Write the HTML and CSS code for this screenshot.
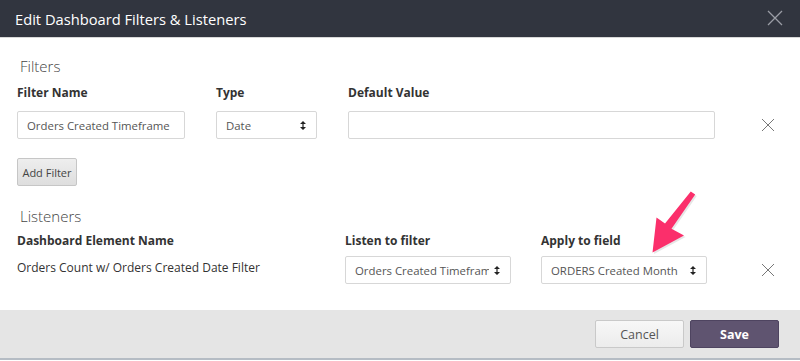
FILE: index.html
```html
<!DOCTYPE html>
<html lang="en">
<head>
    <meta charset="UTF-8">
    <title>Edit Dashboard Filters &amp; Listeners</title>
    <link rel="stylesheet" href="styles.css">
</head>
<body>
    <div class="modal">
        <header class="modal-header">
            <h1>Edit Dashboard Filters &amp; Listeners</h1>
            <span class="close">
                <svg width="16" height="16" viewBox="0 0 16 16"><path d="M1 1L15 15M15 1L1 15" stroke="#9a9da5" stroke-width="1.3"/></svg>
            </span>
        </header>

        <section class="modal-body">
            <h2>Filters</h2>
            <div class="filter-grid">
                <label>Filter Name</label>
                <label>Type</label>
                <label>Default Value</label>
                <span></span>

                <div class="field">Orders Created Timeframe</div>
                <div class="field select">
                    <span>Date</span>
                    <svg width="6" height="9" viewBox="0 0 6 9"><path d="M3 0L6 3H0Z M3 9L0 6H6Z M2.4 2h1.2v5H2.4Z" fill="#222"/></svg>
                </div>
                <div class="field"></div>
                <span class="remove">
                    <svg width="14" height="14" viewBox="0 0 14 14"><path d="M1 1L13 13M13 1L1 13" stroke="#777" stroke-width="1"/></svg>
                </span>
            </div>

            <button class="btn-add">Add Filter</button>

            <h2>Listeners</h2>
            <div class="listener-grid">
                <label>Dashboard Element Name</label>
                <label>Listen to filter</label>
                <label>Apply to field</label>
                <span></span>

                <div class="element-name">Orders Count w/ Orders Created Date Filter</div>
                <div class="field select">
                    <span class="clip">Orders Created Timeframe</span>
                    <svg width="6" height="9" viewBox="0 0 6 9"><path d="M3 0L6 3H0Z M3 9L0 6H6Z M2.4 2h1.2v5H2.4Z" fill="#222"/></svg>
                </div>
                <div class="field select">
                    <span>ORDERS Created Month</span>
                    <svg width="6" height="9" viewBox="0 0 6 9"><path d="M3 0L6 3H0Z M3 9L0 6H6Z M2.4 2h1.2v5H2.4Z" fill="#222"/></svg>
                </div>
                <span class="remove">
                    <svg width="14" height="14" viewBox="0 0 14 14"><path d="M1 1L13 13M13 1L1 13" stroke="#777" stroke-width="1"/></svg>
                </span>
            </div>
        </section>

        <footer class="modal-footer">
            <button class="btn-cancel">Cancel</button>
            <button class="btn-save">Save</button>
        </footer>

        <!-- annotation arrow drawn over the dialog -->
        <svg class="pointer" width="800" height="361" viewBox="0 0 800 361">
            <polygon points="690.8,191.4 695.2,194.6 671.5,228.8 684,235.5 652.5,252.5 656.5,217.5 665,223.5" fill="#b8b8b8" opacity="0.35" transform="translate(1.5,1.5)"/>
            <polygon points="690.8,191.4 695.2,194.6 671.5,228.8 684,235.5 652.5,252.5 656.5,217.5 665,223.5" fill="#fb2f6b"/>
        </svg>
    </div>
</body>
</html>
```

FILE: styles.css
```css
/* General */
body {
    margin: 0;
    font-family: 'Open Sans', 'Liberation Sans', sans-serif;
    color: #333;
    background: #fff;
}

.modal {
    position: relative;
    width: 800px;
    height: 361px;
    overflow: hidden;
}

/* Header */
.modal-header {
    height: 38px;
    background-color: #31353f;
    border-bottom: 1px solid #d8d8d8;
    display: flex;
    align-items: center;
    justify-content: space-between;
    padding: 0 17px 0 15px;
    box-sizing: border-box;
}

.modal-header h1 {
    margin: 0;
    font-size: 14.7px;
    font-weight: 400;
    color: #fff;
}

.close {
    display: flex;
    margin-top: -1px;
}

/* Body */
.modal-body {
    padding: 18px 17px 0 17px;
    height: 272px;
    box-sizing: border-box;
}

.modal-body h2 {
    margin: 0 0 9px 3px;
    font-size: 15px;
    font-weight: 300;
    color: #444;
    line-height: 20px;
}

label {
    font-size: 12px;
    font-weight: 700;
    color: #333;
    line-height: 16px;
}

.filter-grid {
    display: grid;
    grid-template-columns: 168px 101px 367px 1fr;
    column-gap: 31px;
    row-gap: 10px;
    align-items: center;
}

.listener-grid {
    display: grid;
    grid-template-columns: 298px 166px 166px 1fr;
    column-gap: 30px;
    row-gap: 7px;
    align-items: center;
    margin-top: -2px;
}

.field {
    height: 28px;
    border: 1px solid #d7d7d7;
    border-radius: 2px;
    box-sizing: border-box;
    font-size: 11.4px;
    color: #555;
    display: flex;
    align-items: center;
    padding: 0 9px;
    background: #fff;
    white-space: nowrap;
}

.select {
    justify-content: space-between;
}

.select span {
    overflow: hidden;
}

.select svg {
    flex-shrink: 0;
    margin-left: 4px;
    margin-right: 1px;
}

.clip {
    max-width: 134px;
}

.remove {
    display: flex;
    justify-content: flex-end;
    padding-right: 8px;
}

.element-name {
    font-size: 12px;
    color: #333;
    margin-top: -6px;
}

.btn-add {
    display: block;
    margin: 19px 0 20px 0;
    height: 28px;
    width: 60px;
    padding: 0;
    font-family: inherit;
    font-size: 11px;
    color: #444;
    border: 1px solid #c6c6c6;
    border-radius: 2px;
    background: linear-gradient(#eeeeee, #dedede);
}

/* Footer */
.modal-footer {
    height: 50px;
    background-color: #e5e5e5;
    border-bottom: 2px solid #b5bcc4;
    display: flex;
    justify-content: flex-end;
    align-items: center;
    gap: 6px;
    padding: 0 21px 0 0;
    box-sizing: border-box;
}

.modal-footer button {
    width: 89px;
    height: 28px;
    font-family: inherit;
    font-size: 12.5px;
    border-radius: 2px;
    padding: 0;
}

.btn-cancel {
    background: linear-gradient(#f7f7f7, #ececec);
    border: 1px solid #c9c9c9;
    color: #555;
}

.btn-save {
    background-color: #5f5470;
    border: 1px solid #4e4460;
    color: #fff;
    font-weight: 700;
}

/* Annotation */
.pointer {
    position: absolute;
    top: 0;
    left: 0;
    pointer-events: none;
}
```
